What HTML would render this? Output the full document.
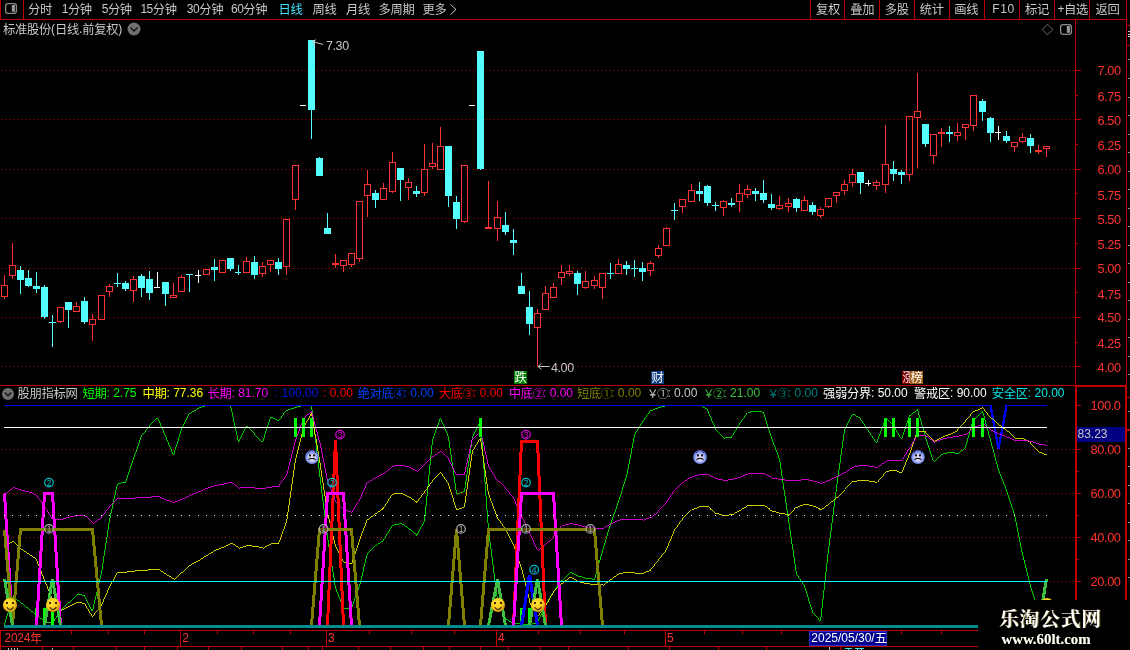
<!DOCTYPE html>
<html lang="zh-CN"><head><meta charset="utf-8"><title>标准股份 日线</title>
<style>html,body{margin:0;padding:0;background:#000;overflow:hidden}svg{display:block;will-change:transform}</style></head>
<body>
<svg width="1130" height="650" viewBox="0 0 1130 650" font-family='"Liberation Sans","Noto Sans CJK SC",sans-serif' font-weight="400">
<rect width="1130" height="650" fill="#000"/>
<g shape-rendering="crispEdges">
<pattern id="p0" x="1" y="0" width="4" height="1" patternUnits="userSpaceOnUse"><rect width="1" height="1" fill="#b40000"/></pattern>
<rect x="1" y="70" width="1074" height="1" fill="url(#p0)"/>
<rect x="1" y="119" width="1074" height="1" fill="url(#p0)"/>
<rect x="1" y="169" width="1074" height="1" fill="url(#p0)"/>
<rect x="1" y="218" width="1074" height="1" fill="url(#p0)"/>
<rect x="1" y="268" width="1074" height="1" fill="url(#p0)"/>
<rect x="1" y="317" width="1074" height="1" fill="url(#p0)"/>
<rect x="1" y="366" width="1074" height="1" fill="url(#p0)"/>
<rect x="1" y="449" width="1074" height="1" fill="url(#p0)"/>
<rect x="1" y="493" width="1074" height="1" fill="url(#p0)"/>
<rect x="1" y="537" width="1074" height="1" fill="url(#p0)"/>
<rect x="1" y="581" width="1074" height="1" fill="url(#p0)"/>
</g>
<g shape-rendering="crispEdges">
<rect x="4" y="275" width="1" height="10" fill="#ff3232"/>
<rect x="4" y="297" width="1" height="2" fill="#ff3232"/>
<rect x="1.5" y="285.5" width="6" height="11" fill="none" stroke="#ff3232" stroke-width="1"/>
<rect x="12" y="243" width="1" height="22" fill="#ff3232"/>
<rect x="12" y="276" width="1" height="3" fill="#ff3232"/>
<rect x="9.5" y="265.5" width="6" height="10" fill="none" stroke="#ff3232" stroke-width="1"/>
<rect x="20" y="266" width="1" height="28" fill="#54ffff"/>
<rect x="17" y="270" width="7" height="10" fill="#54ffff"/>
<rect x="28" y="270" width="1" height="17" fill="#54ffff"/>
<rect x="25" y="278" width="7" height="8" fill="#54ffff"/>
<rect x="36" y="272" width="1" height="21" fill="#54ffff"/>
<rect x="33" y="286" width="7" height="3" fill="#54ffff"/>
<rect x="44" y="285" width="1" height="34" fill="#54ffff"/>
<rect x="41" y="287" width="7" height="30" fill="#54ffff"/>
<rect x="52" y="315" width="1" height="32" fill="#54ffff"/>
<rect x="49" y="322" width="7" height="1" fill="#54ffff"/>
<rect x="60" y="322" width="1" height="1" fill="#ff3232"/>
<rect x="57.5" y="307.5" width="6" height="14" fill="none" stroke="#ff3232" stroke-width="1"/>
<rect x="68" y="302" width="1" height="26" fill="#54ffff"/>
<rect x="65" y="302" width="7" height="8" fill="#54ffff"/>
<rect x="76" y="302" width="1" height="4" fill="#ff3232"/>
<rect x="73.5" y="306.5" width="6" height="5" fill="none" stroke="#ff3232" stroke-width="1"/>
<rect x="84" y="297" width="1" height="27" fill="#54ffff"/>
<rect x="81" y="301" width="7" height="21" fill="#54ffff"/>
<rect x="92" y="314" width="1" height="5" fill="#ff3232"/>
<rect x="92" y="325" width="1" height="16" fill="#ff3232"/>
<rect x="89.5" y="319.5" width="6" height="5" fill="none" stroke="#ff3232" stroke-width="1"/>
<rect x="98.5" y="295.5" width="6" height="24" fill="none" stroke="#ff3232" stroke-width="1"/>
<rect x="109" y="284" width="1" height="2" fill="#ff3232"/>
<rect x="109" y="292" width="1" height="5" fill="#ff3232"/>
<rect x="106.5" y="286.5" width="6" height="5" fill="none" stroke="#ff3232" stroke-width="1"/>
<rect x="117" y="273" width="1" height="14" fill="#54ffff"/>
<rect x="114" y="283" width="7" height="1" fill="#54ffff"/>
<rect x="125" y="281" width="1" height="10" fill="#54ffff"/>
<rect x="122" y="283" width="7" height="6" fill="#54ffff"/>
<rect x="133" y="276" width="1" height="3" fill="#ff3232"/>
<rect x="133" y="291" width="1" height="11" fill="#ff3232"/>
<rect x="130.5" y="279.5" width="6" height="11" fill="none" stroke="#ff3232" stroke-width="1"/>
<rect x="141" y="274" width="1" height="23" fill="#54ffff"/>
<rect x="138" y="276" width="7" height="12" fill="#54ffff"/>
<rect x="149" y="271" width="1" height="29" fill="#54ffff"/>
<rect x="146" y="279" width="7" height="14" fill="#54ffff"/>
<rect x="157" y="272" width="1" height="16" fill="#ffffff"/>
<rect x="154" y="287" width="6" height="1" fill="#ffffff"/>
<rect x="165" y="282" width="1" height="24" fill="#54ffff"/>
<rect x="162" y="282" width="7" height="12" fill="#54ffff"/>
<rect x="173" y="283" width="1" height="12" fill="#ff3232"/>
<rect x="170.5" y="295.5" width="6" height="2" fill="none" stroke="#ff3232" stroke-width="1"/>
<rect x="181" y="275" width="1" height="2" fill="#ff3232"/>
<rect x="178.5" y="277.5" width="6" height="14" fill="none" stroke="#ff3232" stroke-width="1"/>
<rect x="189" y="274" width="1" height="18" fill="#54ffff"/>
<rect x="186" y="274" width="7" height="1" fill="#54ffff"/>
<rect x="198" y="270" width="1" height="13" fill="#ffffff"/>
<rect x="195" y="275" width="6" height="1" fill="#ffffff"/>
<rect x="203.5" y="269.5" width="6" height="5" fill="none" stroke="#ff3232" stroke-width="1"/>
<rect x="214" y="259" width="1" height="22" fill="#54ffff"/>
<rect x="211" y="267" width="7" height="3" fill="#54ffff"/>
<rect x="219.5" y="260.5" width="6" height="12" fill="none" stroke="#ff3232" stroke-width="1"/>
<rect x="230" y="258" width="1" height="13" fill="#54ffff"/>
<rect x="227" y="258" width="7" height="11" fill="#54ffff"/>
<rect x="238" y="265" width="1" height="10" fill="#54ffff"/>
<rect x="235" y="272" width="6" height="1" fill="#54ffff"/>
<rect x="246" y="257" width="1" height="4" fill="#ff3232"/>
<rect x="243.5" y="261.5" width="6" height="11" fill="none" stroke="#ff3232" stroke-width="1"/>
<rect x="254" y="256" width="1" height="23" fill="#54ffff"/>
<rect x="251" y="262" width="7" height="13" fill="#54ffff"/>
<rect x="262" y="262" width="1" height="4" fill="#ff3232"/>
<rect x="262" y="274" width="1" height="3" fill="#ff3232"/>
<rect x="259.5" y="266.5" width="6" height="7" fill="none" stroke="#ff3232" stroke-width="1"/>
<rect x="270" y="265" width="1" height="7" fill="#ff3232"/>
<rect x="267.5" y="260.5" width="6" height="4" fill="none" stroke="#ff3232" stroke-width="1"/>
<rect x="278" y="258" width="1" height="17" fill="#54ffff"/>
<rect x="275" y="262" width="7" height="7" fill="#54ffff"/>
<rect x="286" y="267" width="1" height="8" fill="#ff3232"/>
<rect x="283.5" y="219.5" width="6" height="47" fill="none" stroke="#ff3232" stroke-width="1"/>
<rect x="295" y="200" width="1" height="10" fill="#ff3232"/>
<rect x="292.5" y="165.5" width="6" height="34" fill="none" stroke="#ff3232" stroke-width="1"/>
<rect x="300" y="105" width="6" height="1" fill="#fff"/>
<rect x="311" y="40" width="1" height="99" fill="#54ffff"/>
<rect x="308" y="40" width="7" height="70" fill="#54ffff"/>
<rect x="319" y="157" width="1" height="19" fill="#54ffff"/>
<rect x="316" y="158" width="7" height="18" fill="#54ffff"/>
<rect x="327" y="213" width="1" height="21" fill="#54ffff"/>
<rect x="324" y="228" width="7" height="6" fill="#54ffff"/>
<rect x="335" y="254" width="1" height="14" fill="#ff3232"/>
<rect x="332" y="263" width="7" height="2" fill="#ff3232"/>
<rect x="343" y="266" width="1" height="6" fill="#ff3232"/>
<rect x="340.5" y="260.5" width="6" height="5" fill="none" stroke="#ff3232" stroke-width="1"/>
<rect x="351" y="265" width="1" height="2" fill="#ff3232"/>
<rect x="348.5" y="253.5" width="6" height="11" fill="none" stroke="#ff3232" stroke-width="1"/>
<rect x="359" y="259" width="1" height="3" fill="#ff3232"/>
<rect x="356.5" y="201.5" width="6" height="57" fill="none" stroke="#ff3232" stroke-width="1"/>
<rect x="367" y="170" width="1" height="14" fill="#ff3232"/>
<rect x="367" y="196" width="1" height="21" fill="#ff3232"/>
<rect x="364.5" y="184.5" width="6" height="11" fill="none" stroke="#ff3232" stroke-width="1"/>
<rect x="375" y="190" width="1" height="18" fill="#54ffff"/>
<rect x="372" y="193" width="7" height="7" fill="#54ffff"/>
<rect x="383" y="183" width="1" height="5" fill="#ff3232"/>
<rect x="380.5" y="188.5" width="6" height="11" fill="none" stroke="#ff3232" stroke-width="1"/>
<rect x="392" y="152" width="1" height="10" fill="#ff3232"/>
<rect x="392" y="192" width="1" height="1" fill="#ff3232"/>
<rect x="389.5" y="162.5" width="6" height="29" fill="none" stroke="#ff3232" stroke-width="1"/>
<rect x="400" y="168" width="1" height="33" fill="#54ffff"/>
<rect x="397" y="168" width="7" height="12" fill="#54ffff"/>
<rect x="408" y="178" width="1" height="4" fill="#ff3232"/>
<rect x="408" y="188" width="1" height="12" fill="#ff3232"/>
<rect x="405.5" y="182.5" width="6" height="5" fill="none" stroke="#ff3232" stroke-width="1"/>
<rect x="416" y="186" width="1" height="11" fill="#54ffff"/>
<rect x="413" y="191" width="7" height="3" fill="#54ffff"/>
<rect x="424" y="144" width="1" height="25" fill="#ff3232"/>
<rect x="424" y="193" width="1" height="3" fill="#ff3232"/>
<rect x="421.5" y="169.5" width="6" height="23" fill="none" stroke="#ff3232" stroke-width="1"/>
<rect x="432" y="143" width="1" height="20" fill="#ff3232"/>
<rect x="432" y="167" width="1" height="2" fill="#ff3232"/>
<rect x="429.5" y="163.5" width="6" height="3" fill="none" stroke="#ff3232" stroke-width="1"/>
<rect x="440" y="127" width="1" height="19" fill="#ff3232"/>
<rect x="437.5" y="146.5" width="6" height="23" fill="none" stroke="#ff3232" stroke-width="1"/>
<rect x="448" y="146" width="1" height="61" fill="#54ffff"/>
<rect x="445" y="146" width="7" height="50" fill="#54ffff"/>
<rect x="456" y="196" width="1" height="33" fill="#54ffff"/>
<rect x="453" y="202" width="7" height="17" fill="#54ffff"/>
<rect x="464" y="222" width="1" height="1" fill="#ff3232"/>
<rect x="461.5" y="165.5" width="6" height="56" fill="none" stroke="#ff3232" stroke-width="1"/>
<rect x="469" y="105" width="6" height="1" fill="#fff"/>
<rect x="480" y="51" width="1" height="119" fill="#54ffff"/>
<rect x="477" y="51" width="7" height="118" fill="#54ffff"/>
<rect x="488" y="181" width="1" height="48" fill="#ff3232"/>
<rect x="485" y="227" width="7" height="2" fill="#ff3232"/>
<rect x="497" y="201" width="1" height="16" fill="#ff3232"/>
<rect x="497" y="229" width="1" height="12" fill="#ff3232"/>
<rect x="494.5" y="217.5" width="6" height="11" fill="none" stroke="#ff3232" stroke-width="1"/>
<rect x="505" y="212" width="1" height="23" fill="#54ffff"/>
<rect x="502" y="225" width="7" height="7" fill="#54ffff"/>
<rect x="513" y="229" width="1" height="26" fill="#54ffff"/>
<rect x="510" y="240" width="7" height="3" fill="#54ffff"/>
<rect x="521" y="273" width="1" height="21" fill="#54ffff"/>
<rect x="518" y="286" width="7" height="8" fill="#54ffff"/>
<rect x="529" y="291" width="1" height="44" fill="#54ffff"/>
<rect x="526" y="307" width="7" height="17" fill="#54ffff"/>
<rect x="537" y="309" width="1" height="4" fill="#ff3232"/>
<rect x="537" y="328" width="1" height="38" fill="#ff3232"/>
<rect x="534.5" y="313.5" width="6" height="14" fill="none" stroke="#ff3232" stroke-width="1"/>
<rect x="545" y="286" width="1" height="7" fill="#ff3232"/>
<rect x="542.5" y="293.5" width="6" height="16" fill="none" stroke="#ff3232" stroke-width="1"/>
<rect x="553" y="283" width="1" height="4" fill="#ff3232"/>
<rect x="550.5" y="287.5" width="6" height="10" fill="none" stroke="#ff3232" stroke-width="1"/>
<rect x="561" y="265" width="1" height="7" fill="#ff3232"/>
<rect x="561" y="278" width="1" height="7" fill="#ff3232"/>
<rect x="558.5" y="272.5" width="6" height="5" fill="none" stroke="#ff3232" stroke-width="1"/>
<rect x="569" y="265" width="1" height="6" fill="#ff3232"/>
<rect x="569" y="274" width="1" height="2" fill="#ff3232"/>
<rect x="566.5" y="271.5" width="6" height="2" fill="none" stroke="#ff3232" stroke-width="1"/>
<rect x="577" y="271" width="1" height="24" fill="#54ffff"/>
<rect x="574" y="273" width="7" height="11" fill="#54ffff"/>
<rect x="585" y="271" width="1" height="10" fill="#ff3232"/>
<rect x="585" y="288" width="1" height="1" fill="#ff3232"/>
<rect x="582.5" y="281.5" width="6" height="6" fill="none" stroke="#ff3232" stroke-width="1"/>
<rect x="594" y="276" width="1" height="4" fill="#ff3232"/>
<rect x="594" y="286" width="1" height="3" fill="#ff3232"/>
<rect x="591.5" y="280.5" width="6" height="5" fill="none" stroke="#ff3232" stroke-width="1"/>
<rect x="602" y="288" width="1" height="11" fill="#ff3232"/>
<rect x="599.5" y="273.5" width="6" height="14" fill="none" stroke="#ff3232" stroke-width="1"/>
<rect x="610" y="263" width="1" height="16" fill="#54ffff"/>
<rect x="607" y="273" width="7" height="1" fill="#54ffff"/>
<rect x="618" y="259" width="1" height="5" fill="#ff3232"/>
<rect x="615.5" y="264.5" width="6" height="9" fill="none" stroke="#ff3232" stroke-width="1"/>
<rect x="626" y="261" width="1" height="14" fill="#54ffff"/>
<rect x="623" y="265" width="7" height="4" fill="#54ffff"/>
<rect x="634" y="260" width="1" height="17" fill="#54ffff"/>
<rect x="631" y="268" width="7" height="1" fill="#54ffff"/>
<rect x="642" y="262" width="1" height="19" fill="#54ffff"/>
<rect x="639" y="268" width="7" height="4" fill="#54ffff"/>
<rect x="650" y="261" width="1" height="2" fill="#ff3232"/>
<rect x="650" y="271" width="1" height="5" fill="#ff3232"/>
<rect x="647.5" y="263.5" width="6" height="7" fill="none" stroke="#ff3232" stroke-width="1"/>
<rect x="658" y="245" width="1" height="3" fill="#ff3232"/>
<rect x="658" y="256" width="1" height="2" fill="#ff3232"/>
<rect x="655.5" y="248.5" width="6" height="7" fill="none" stroke="#ff3232" stroke-width="1"/>
<rect x="666" y="227" width="1" height="1" fill="#ff3232"/>
<rect x="663.5" y="228.5" width="6" height="17" fill="none" stroke="#ff3232" stroke-width="1"/>
<rect x="674" y="203" width="1" height="17" fill="#54ffff"/>
<rect x="671" y="210" width="7" height="1" fill="#54ffff"/>
<rect x="682" y="207" width="1" height="6" fill="#ff3232"/>
<rect x="679.5" y="199.5" width="6" height="7" fill="none" stroke="#ff3232" stroke-width="1"/>
<rect x="691" y="184" width="1" height="6" fill="#ff3232"/>
<rect x="688.5" y="190.5" width="6" height="11" fill="none" stroke="#ff3232" stroke-width="1"/>
<rect x="699" y="182" width="1" height="19" fill="#54ffff"/>
<rect x="696" y="191" width="7" height="3" fill="#54ffff"/>
<rect x="707" y="185" width="1" height="21" fill="#54ffff"/>
<rect x="704" y="186" width="7" height="17" fill="#54ffff"/>
<rect x="715" y="202" width="1" height="9" fill="#54ffff"/>
<rect x="712" y="205" width="7" height="1" fill="#54ffff"/>
<rect x="723" y="200" width="1" height="1" fill="#ff3232"/>
<rect x="723" y="208" width="1" height="8" fill="#ff3232"/>
<rect x="720.5" y="201.5" width="6" height="6" fill="none" stroke="#ff3232" stroke-width="1"/>
<rect x="731" y="198" width="1" height="9" fill="#54ffff"/>
<rect x="728" y="203" width="7" height="2" fill="#54ffff"/>
<rect x="739" y="184" width="1" height="9" fill="#ff3232"/>
<rect x="739" y="202" width="1" height="10" fill="#ff3232"/>
<rect x="736.5" y="193.5" width="6" height="8" fill="none" stroke="#ff3232" stroke-width="1"/>
<rect x="747" y="185" width="1" height="4" fill="#ff3232"/>
<rect x="747" y="195" width="1" height="3" fill="#ff3232"/>
<rect x="744.5" y="189.5" width="6" height="5" fill="none" stroke="#ff3232" stroke-width="1"/>
<rect x="755" y="188" width="1" height="13" fill="#54ffff"/>
<rect x="752" y="191" width="7" height="3" fill="#54ffff"/>
<rect x="763" y="180" width="1" height="23" fill="#54ffff"/>
<rect x="760" y="193" width="7" height="7" fill="#54ffff"/>
<rect x="771" y="194" width="1" height="16" fill="#54ffff"/>
<rect x="768" y="204" width="7" height="4" fill="#54ffff"/>
<rect x="779" y="196" width="1" height="9" fill="#ff3232"/>
<rect x="779" y="209" width="1" height="1" fill="#ff3232"/>
<rect x="776.5" y="205.5" width="6" height="3" fill="none" stroke="#ff3232" stroke-width="1"/>
<rect x="788" y="198" width="1" height="5" fill="#ff3232"/>
<rect x="788" y="207" width="1" height="5" fill="#ff3232"/>
<rect x="785.5" y="203.5" width="6" height="3" fill="none" stroke="#ff3232" stroke-width="1"/>
<rect x="796" y="198" width="1" height="14" fill="#54ffff"/>
<rect x="793" y="199" width="7" height="9" fill="#54ffff"/>
<rect x="804" y="196" width="1" height="4" fill="#ff3232"/>
<rect x="801.5" y="200.5" width="6" height="10" fill="none" stroke="#ff3232" stroke-width="1"/>
<rect x="812" y="202" width="1" height="13" fill="#54ffff"/>
<rect x="809" y="205" width="7" height="7" fill="#54ffff"/>
<rect x="820" y="207" width="1" height="2" fill="#ff3232"/>
<rect x="820" y="216" width="1" height="2" fill="#ff3232"/>
<rect x="817.5" y="209.5" width="6" height="6" fill="none" stroke="#ff3232" stroke-width="1"/>
<rect x="828" y="207" width="1" height="1" fill="#ff3232"/>
<rect x="825.5" y="198.5" width="6" height="8" fill="none" stroke="#ff3232" stroke-width="1"/>
<rect x="836" y="196" width="1" height="7" fill="#ff3232"/>
<rect x="833.5" y="192.5" width="6" height="3" fill="none" stroke="#ff3232" stroke-width="1"/>
<rect x="844" y="180" width="1" height="4" fill="#ff3232"/>
<rect x="844" y="191" width="1" height="4" fill="#ff3232"/>
<rect x="841.5" y="184.5" width="6" height="6" fill="none" stroke="#ff3232" stroke-width="1"/>
<rect x="852" y="169" width="1" height="5" fill="#ff3232"/>
<rect x="852" y="183" width="1" height="4" fill="#ff3232"/>
<rect x="849.5" y="174.5" width="6" height="8" fill="none" stroke="#ff3232" stroke-width="1"/>
<rect x="860" y="172" width="1" height="22" fill="#54ffff"/>
<rect x="857" y="172" width="7" height="11" fill="#54ffff"/>
<rect x="868" y="180" width="1" height="6" fill="#ffffff"/>
<rect x="865" y="183" width="6" height="1" fill="#ffffff"/>
<rect x="876" y="180" width="1" height="2" fill="#ff3232"/>
<rect x="876" y="186" width="1" height="4" fill="#ff3232"/>
<rect x="873.5" y="182.5" width="6" height="3" fill="none" stroke="#ff3232" stroke-width="1"/>
<rect x="885" y="125" width="1" height="39" fill="#ff3232"/>
<rect x="885" y="185" width="1" height="8" fill="#ff3232"/>
<rect x="882.5" y="164.5" width="6" height="20" fill="none" stroke="#ff3232" stroke-width="1"/>
<rect x="893" y="161" width="1" height="20" fill="#54ffff"/>
<rect x="890" y="169" width="7" height="5" fill="#54ffff"/>
<rect x="901" y="170" width="1" height="14" fill="#54ffff"/>
<rect x="898" y="172" width="7" height="3" fill="#54ffff"/>
<rect x="909" y="175" width="1" height="6" fill="#ff3232"/>
<rect x="906.5" y="116.5" width="6" height="58" fill="none" stroke="#ff3232" stroke-width="1"/>
<rect x="917" y="73" width="1" height="38" fill="#ff3232"/>
<rect x="917" y="118" width="1" height="50" fill="#ff3232"/>
<rect x="914.5" y="111.5" width="6" height="6" fill="none" stroke="#ff3232" stroke-width="1"/>
<rect x="925" y="124" width="1" height="23" fill="#54ffff"/>
<rect x="922" y="124" width="7" height="20" fill="#54ffff"/>
<rect x="933" y="156" width="1" height="8" fill="#ff3232"/>
<rect x="930.5" y="134.5" width="6" height="21" fill="none" stroke="#ff3232" stroke-width="1"/>
<rect x="941" y="128" width="1" height="19" fill="#ff3232"/>
<rect x="938" y="132" width="7" height="2" fill="#ff3232"/>
<rect x="949" y="126" width="1" height="16" fill="#54ffff"/>
<rect x="946" y="132" width="7" height="2" fill="#54ffff"/>
<rect x="957" y="123" width="1" height="9" fill="#ff3232"/>
<rect x="957" y="136" width="1" height="5" fill="#ff3232"/>
<rect x="954.5" y="132.5" width="6" height="3" fill="none" stroke="#ff3232" stroke-width="1"/>
<rect x="965" y="128" width="1" height="12" fill="#ff3232"/>
<rect x="962.5" y="124.5" width="6" height="3" fill="none" stroke="#ff3232" stroke-width="1"/>
<rect x="973" y="126" width="1" height="5" fill="#ff3232"/>
<rect x="970.5" y="95.5" width="6" height="30" fill="none" stroke="#ff3232" stroke-width="1"/>
<rect x="982" y="99" width="1" height="22" fill="#54ffff"/>
<rect x="979" y="101" width="7" height="11" fill="#54ffff"/>
<rect x="990" y="117" width="1" height="25" fill="#54ffff"/>
<rect x="987" y="118" width="7" height="15" fill="#54ffff"/>
<rect x="998" y="126" width="1" height="14" fill="#ffffff"/>
<rect x="995" y="132" width="6" height="1" fill="#ffffff"/>
<rect x="1006" y="131" width="1" height="12" fill="#54ffff"/>
<rect x="1003" y="136" width="7" height="5" fill="#54ffff"/>
<rect x="1014" y="147" width="1" height="5" fill="#ff3232"/>
<rect x="1011.5" y="142.5" width="6" height="4" fill="none" stroke="#ff3232" stroke-width="1"/>
<rect x="1022" y="133" width="1" height="4" fill="#ff3232"/>
<rect x="1022" y="142" width="1" height="1" fill="#ff3232"/>
<rect x="1019.5" y="137.5" width="6" height="4" fill="none" stroke="#ff3232" stroke-width="1"/>
<rect x="1030" y="134" width="1" height="19" fill="#54ffff"/>
<rect x="1027" y="138" width="7" height="8" fill="#54ffff"/>
<rect x="1038" y="145" width="1" height="9" fill="#ff3232"/>
<rect x="1035" y="150" width="7" height="2" fill="#ff3232"/>
<rect x="1046" y="149" width="1" height="8" fill="#ff3232"/>
<rect x="1043.5" y="146.5" width="6" height="2" fill="none" stroke="#ff3232" stroke-width="1"/>
</g>
<path d="M312.5 41.5 L323 44.5 M312.5 41.5 l3.5 -1.8 M312.5 41.5 l2 3.2" stroke="#c8c8c8" stroke-width="1" fill="none"/>
<text x="326" y="50.92" fill="#c8c8c8" xml:space="preserve"><tspan font-size="12.5" letter-spacing="-0.4" dy="-0.8">7.30</tspan></text>
<path d="M538 366.5 H549.5 M538 366.5 l3.5 -3 M538 366.5 l3.5 3" stroke="#c8c8c8" stroke-width="1" fill="none"/>
<text x="551" y="372.82" fill="#c8c8c8" xml:space="preserve"><tspan font-size="12.5" letter-spacing="-0.4" dy="-0.8">4.00</tspan></text>
<rect x="514" y="371" width="13" height="13" fill="#008000"/>
<text x="520.5" y="381.82" fill="#ffffff" text-anchor="middle" font-weight="400" xml:space="preserve"><tspan font-size="12.3" letter-spacing="-0.3">跌</tspan></text>
<rect x="651" y="371" width="13" height="13" fill="#103c80"/>
<text x="657.5" y="381.82" fill="#ffffff" text-anchor="middle" font-weight="400" xml:space="preserve"><tspan font-size="12.3" letter-spacing="-0.3">财</tspan></text>
<rect x="902" y="371" width="13" height="13" fill="#800000"/>
<text x="908.5" y="381.82" fill="#ffffff" text-anchor="middle" font-weight="400" xml:space="preserve"><tspan font-size="12.3" letter-spacing="-0.3">涨</tspan></text>
<rect x="910" y="371" width="13" height="13" fill="#a0601c"/>
<text x="916.5" y="381.82" fill="#ffffff" text-anchor="middle" font-weight="400" xml:space="preserve"><tspan font-size="12.3" letter-spacing="-0.3">榜</tspan></text>
<polyline points="990.5,405.4 998.5,449.0 1006.5,405.4" fill="none" stroke="#0000ff" stroke-width="2.3" shape-rendering="crispEdges" stroke-linejoin="miter"/>
<polyline points="4.5,624.7 12.5,597.0 20.5,603.2 28.5,609.5 36.5,615.7 44.5,622.3 52.5,623.0 60.5,610.6 68.5,602.0 76.5,594.3 84.5,595.5 92.5,610.6 101.5,573.0 109.5,520.0 117.5,483.6 125.5,482.0 133.5,458.6 141.5,436.0 149.5,426.0 157.5,417.6 165.5,436.2 173.5,455.4 181.5,429.0 189.5,413.0 198.5,407.8 206.5,405.4 214.5,405.4 222.5,405.4 230.5,405.4 238.5,442.4 246.5,426.0 254.5,434.0 262.5,442.4 270.5,417.0 278.5,421.0 286.5,410.0 295.5,407.0 303.5,405.4 311.5,405.4 319.5,473.0 327.5,537.0 335.5,588.0 343.5,608.0 351.5,608.0 359.5,586.0 367.5,553.0 375.5,545.0 383.5,540.0 392.5,525.0 400.5,523.6 408.5,529.0 416.5,535.6 424.5,521.0 432.5,440.0 440.5,418.0 448.5,437.0 456.5,494.0 464.5,491.0 472.5,437.0 480.5,421.0 488.5,530.0 497.5,600.0 505.5,619.0 513.5,623.0 521.5,624.3 529.5,624.3 537.5,622.5 545.5,605.0 553.5,592.0 561.5,580.0 569.5,572.4 577.5,576.0 585.5,578.4 594.5,579.4 602.5,551.0 610.5,524.0 618.5,502.0 626.5,476.0 634.5,434.5 642.5,422.0 650.5,410.4 658.5,407.4 666.5,405.4 674.5,405.4 682.5,405.4 691.5,405.4 699.5,405.4 707.5,410.0 715.5,429.0 723.5,438.0 731.5,437.0 739.5,424.0 747.5,412.6 755.5,411.0 763.5,412.6 771.5,438.0 779.5,459.0 788.5,520.0 796.5,574.0 804.5,586.0 812.5,612.0 820.5,621.4 828.5,550.0 836.5,488.0 844.5,430.0 852.5,414.4 860.5,419.0 868.5,431.0 876.5,443.0 885.5,419.0 893.5,426.0 901.5,439.0 909.5,415.0 917.5,409.4 925.5,437.0 933.5,461.0 941.5,454.0 949.5,452.4 957.5,453.4 965.5,447.0 973.5,419.0 982.5,411.0 990.5,440.0 998.5,470.0 1006.5,490.0 1014.5,515.0 1022.5,554.0 1030.5,586.0 1038.5,612.0 1046.5,619.7" fill="none" stroke="#00ff00" stroke-width="0.8" shape-rendering="crispEdges"/>
<polyline points="4.5,545.0 12.5,541.0 20.5,549.0 28.5,554.4 36.5,560.0 44.5,580.0 52.5,600.0 60.5,610.0 68.5,606.0 76.5,602.4 84.5,603.6 92.5,616.6 101.5,605.0 109.5,587.0 117.5,572.4 125.5,572.0 133.5,571.0 141.5,570.6 149.5,569.8 157.5,569.0 165.5,574.4 173.5,579.4 181.5,572.0 189.5,565.0 198.5,560.0 206.5,555.0 214.5,550.4 222.5,547.0 230.5,543.0 238.5,548.0 246.5,545.6 254.5,546.4 262.5,548.0 270.5,543.6 278.5,543.6 286.5,522.0 295.5,460.0 303.5,428.0 311.5,413.0 319.5,460.0 327.5,513.0 335.5,546.0 343.5,562.0 351.5,564.0 359.5,540.0 367.5,519.0 375.5,513.0 383.5,508.0 392.5,494.0 400.5,493.0 408.5,497.0 416.5,502.6 424.5,492.0 432.5,481.0 440.5,472.0 448.5,484.0 456.5,509.5 464.5,506.5 472.5,451.0 480.5,438.0 488.5,494.0 497.5,518.0 505.5,529.0 513.5,545.0 521.5,568.0 529.5,600.5 537.5,616.7 545.5,606.0 553.5,592.0 561.5,583.0 569.5,577.0 577.5,581.6 585.5,583.6 594.5,584.6 602.5,585.0 610.5,579.0 618.5,573.6 626.5,572.4 634.5,573.0 642.5,573.0 650.5,570.0 658.5,560.0 666.5,549.6 674.5,530.0 682.5,519.0 691.5,509.8 699.5,506.6 707.5,506.6 715.5,513.4 723.5,515.6 731.5,514.6 739.5,510.0 747.5,505.4 755.5,505.0 763.5,505.4 771.5,511.0 779.5,513.4 788.5,514.6 796.5,507.0 804.5,504.0 812.5,506.0 820.5,509.6 828.5,503.6 836.5,497.0 844.5,489.4 852.5,481.4 860.5,480.4 868.5,481.0 876.5,482.4 885.5,471.5 893.5,470.0 901.5,473.4 909.5,454.0 917.5,431.0 925.5,432.0 933.5,441.0 941.5,437.0 949.5,434.0 957.5,430.0 965.5,421.0 973.5,411.4 982.5,407.4 990.5,418.0 998.5,425.0 1006.5,431.0 1014.5,438.0 1022.5,438.6 1030.5,443.0 1038.5,452.0 1046.5,455.4" fill="none" stroke="#ffff00" stroke-width="0.8" shape-rendering="crispEdges"/>
<polyline points="4.5,494.0 12.5,487.4 20.5,490.0 28.5,492.0 36.5,495.6 44.5,506.0 52.5,519.4 60.5,519.4 68.5,517.0 76.5,515.4 84.5,516.0 92.5,523.0 101.5,517.0 109.5,507.0 117.5,498.4 125.5,498.4 133.5,498.0 141.5,497.4 149.5,497.0 157.5,496.4 165.5,500.0 173.5,502.4 181.5,499.0 189.5,495.0 198.5,491.6 206.5,488.0 214.5,485.5 222.5,484.0 230.5,482.4 238.5,488.0 246.5,487.4 254.5,488.0 262.5,488.4 270.5,487.0 278.5,486.4 286.5,475.0 295.5,439.5 303.5,417.5 311.5,410.5 319.5,441.0 327.5,480.0 335.5,501.0 343.5,510.0 351.5,512.4 359.5,500.0 367.5,482.0 375.5,477.0 383.5,473.0 392.5,466.0 400.5,465.0 408.5,467.0 416.5,471.0 424.5,464.0 432.5,456.0 440.5,451.0 448.5,459.0 456.5,475.0 464.5,474.0 472.5,438.0 480.5,431.0 488.5,466.0 497.5,481.0 505.5,488.0 513.5,498.0 521.5,516.0 529.5,533.0 537.5,550.0 545.5,543.6 553.5,537.0 561.5,525.6 569.5,523.6 577.5,525.0 585.5,527.0 594.5,528.0 602.5,528.0 610.5,523.6 618.5,520.0 626.5,519.5 634.5,519.5 642.5,520.0 650.5,517.0 658.5,511.0 666.5,502.0 674.5,490.0 682.5,482.0 691.5,476.6 699.5,474.4 707.5,474.6 715.5,478.6 723.5,480.4 731.5,479.4 739.5,477.0 747.5,473.6 755.5,473.4 763.5,473.6 771.5,478.0 779.5,479.6 788.5,480.4 796.5,480.4 804.5,479.4 812.5,481.0 820.5,483.4 828.5,480.0 836.5,476.0 844.5,472.0 852.5,467.0 860.5,465.4 868.5,466.0 876.5,467.4 885.5,461.0 893.5,460.0 901.5,461.0 909.5,448.0 917.5,435.0 925.5,436.0 933.5,442.0 941.5,439.0 949.5,437.4 957.5,436.0 965.5,434.4 973.5,427.0 982.5,424.0 990.5,430.0 998.5,434.0 1006.5,437.0 1014.5,440.6 1022.5,440.0 1030.5,441.4 1038.5,444.0 1046.5,445.6" fill="none" stroke="#ff00ff" stroke-width="0.8" shape-rendering="crispEdges"/>
<polyline points="4.5,405.4 12.5,405.4 20.5,405.4 28.5,405.4 36.5,405.4 44.5,405.4 52.5,405.4 60.5,405.4 68.5,405.4 76.5,405.4 84.5,405.4 92.5,405.4 101.5,405.4 109.5,405.4 117.5,405.4 125.5,405.4 133.5,405.4 141.5,405.4 149.5,405.4 157.5,405.4 165.5,405.4 173.5,405.4 181.5,405.4 189.5,405.4 198.5,405.4 206.5,405.4 214.5,405.4 222.5,405.4 230.5,405.4 238.5,405.4 246.5,405.4 254.5,405.4 262.5,405.4 270.5,405.4 278.5,405.4 286.5,405.4 295.5,405.4 303.5,405.4 311.5,405.4 319.5,405.4 327.5,405.4 335.5,405.4 343.5,405.4 351.5,405.4 359.5,405.4 367.5,405.4 375.5,405.4 383.5,405.4 392.5,405.4 400.5,405.4 408.5,405.4 416.5,405.4 424.5,405.4 432.5,405.4 440.5,405.4 448.5,405.4 456.5,405.4 464.5,405.4 472.5,405.4 480.5,405.4 488.5,405.4 497.5,405.4 505.5,405.4 513.5,405.4 521.5,405.4 529.5,405.4 537.5,405.4 545.5,405.4 553.5,405.4 561.5,405.4 569.5,405.4 577.5,405.4 585.5,405.4 594.5,405.4 602.5,405.4 610.5,405.4 618.5,405.4 626.5,405.4 634.5,405.4 642.5,405.4 650.5,405.4 658.5,405.4 666.5,405.4 674.5,405.4 682.5,405.4 691.5,405.4 699.5,405.4 707.5,405.4 715.5,405.4 723.5,405.4 731.5,405.4 739.5,405.4 747.5,405.4 755.5,405.4 763.5,405.4 771.5,405.4 779.5,405.4 788.5,405.4 796.5,405.4 804.5,405.4 812.5,405.4 820.5,405.4 828.5,405.4 836.5,405.4 844.5,405.4 852.5,405.4 860.5,405.4 868.5,405.4 876.5,405.4 885.5,405.4 893.5,405.4 901.5,405.4 909.5,405.4 917.5,405.4 925.5,405.4 933.5,405.4 941.5,405.4 949.5,405.4 957.5,405.4 965.5,405.4 973.5,405.4 982.5,405.4 990.5,405.4" fill="none" stroke="#0000ff" stroke-width="1.4" shape-rendering="crispEdges"/>
<polyline points="1006.5,405.4 1014.5,405.4 1022.5,405.4 1030.5,405.4 1038.5,405.4 1046.5,405.4" fill="none" stroke="#0000ff" stroke-width="1.4" shape-rendering="crispEdges"/>
<g shape-rendering="crispEdges">
<rect x="43" y="608" width="3" height="17" fill="#00ff00"/>
<rect x="51" y="612" width="3" height="13" fill="#00ff00"/>
<rect x="520" y="608" width="3" height="17" fill="#00ff00"/>
<rect x="528" y="608" width="3" height="17" fill="#00ff00"/>
<rect x="35" y="608" width="1" height="9" fill="#00ff00"/>
</g>
<polyline points="521.5,625.5 529.5,575.0 537.5,625.5" fill="none" stroke="#0000ff" stroke-width="3.2" shape-rendering="crispEdges" stroke-linejoin="miter"/>
<polyline points="327.5,625.5 335.5,440.0 343.5,625.5" fill="none" stroke="#ff0000" stroke-width="3" shape-rendering="crispEdges" stroke-linejoin="miter"/>
<polyline points="513.5,625.5 521.5,441.0 529.5,441.0 537.5,441.0 545.5,625.5" fill="none" stroke="#ff0000" stroke-width="3" shape-rendering="crispEdges" stroke-linejoin="miter"/>
<polyline points="4.5,493.5 12.5,625.5" fill="none" stroke="#ff00ff" stroke-width="3" shape-rendering="crispEdges" stroke-linejoin="miter"/>
<polyline points="36.5,625.5 44.5,493.5 52.5,493.5 60.5,625.5" fill="none" stroke="#ff00ff" stroke-width="3" shape-rendering="crispEdges" stroke-linejoin="miter"/>
<polyline points="319.5,625.5 327.5,493.5 335.5,493.5 343.5,493.5 351.5,625.5" fill="none" stroke="#ff00ff" stroke-width="3" shape-rendering="crispEdges" stroke-linejoin="miter"/>
<polyline points="513.5,625.5 521.5,493.5 529.5,493.5 537.5,493.5 545.5,493.5 553.5,493.5 561.5,625.5" fill="none" stroke="#ff00ff" stroke-width="3" shape-rendering="crispEdges" stroke-linejoin="miter"/>
<polyline points="4.5,529.6 12.5,625.5 20.5,529.6 28.5,529.6 36.5,529.6 44.5,529.6 52.5,529.6 60.5,529.6 68.5,529.6 76.5,529.6 84.5,529.6 92.5,529.6 101.5,625.5" fill="none" stroke="#808000" stroke-width="3" shape-rendering="crispEdges" stroke-linejoin="miter"/>
<polyline points="311.5,625.5 319.5,529.6 327.5,529.6 335.5,529.6 343.5,529.6 351.5,529.6 359.5,625.5" fill="none" stroke="#808000" stroke-width="3" shape-rendering="crispEdges" stroke-linejoin="miter"/>
<polyline points="448.5,625.5 456.5,529.6 464.5,625.5" fill="none" stroke="#808000" stroke-width="3" shape-rendering="crispEdges" stroke-linejoin="miter"/>
<polyline points="480.5,625.5 488.5,529.6 497.5,529.6 505.5,529.6 513.5,529.6 521.5,529.6 529.5,529.6 537.5,529.6 545.5,529.6 553.5,529.6 561.5,529.6 569.5,529.6 577.5,529.6 585.5,529.6 594.5,529.6 602.5,625.5" fill="none" stroke="#808000" stroke-width="3" shape-rendering="crispEdges" stroke-linejoin="miter"/>
<polyline points="4.5,579.0 12.5,625.5" fill="none" stroke="#40c040" stroke-width="3" shape-rendering="crispEdges" stroke-linejoin="miter"/>
<polyline points="44.5,625.5 52.5,579.0 60.5,625.5" fill="none" stroke="#40c040" stroke-width="3" shape-rendering="crispEdges" stroke-linejoin="miter"/>
<polyline points="488.5,625.5 497.5,579.0 505.5,625.5" fill="none" stroke="#40c040" stroke-width="3" shape-rendering="crispEdges" stroke-linejoin="miter"/>
<polyline points="529.5,625.5 537.5,579.0 545.5,625.5" fill="none" stroke="#40c040" stroke-width="3" shape-rendering="crispEdges" stroke-linejoin="miter"/>
<polyline points="1038.5,625.5 1046.5,579.0" fill="none" stroke="#40c040" stroke-width="3" shape-rendering="crispEdges" stroke-linejoin="miter"/>
<g shape-rendering="crispEdges">
<rect x="294" y="418" width="3" height="19" fill="#00ff00"/>
<rect x="302" y="418" width="3" height="19" fill="#00ff00"/>
<rect x="310" y="418" width="3" height="19" fill="#00ff00"/>
<rect x="479" y="418" width="3" height="19" fill="#00ff00"/>
<rect x="884" y="418" width="3" height="19" fill="#00ff00"/>
<rect x="892" y="418" width="3" height="19" fill="#00ff00"/>
<rect x="908" y="418" width="3" height="19" fill="#00ff00"/>
<rect x="916" y="418" width="3" height="19" fill="#00ff00"/>
<rect x="972" y="418" width="3" height="19" fill="#00ff00"/>
<rect x="981" y="418" width="3" height="19" fill="#00ff00"/>
<rect x="4" y="427" width="1043" height="1" fill="#ffffff"/>
<rect x="4" y="581" width="1043" height="1" fill="#00ffff"/>
</g>
<path shape-rendering="crispEdges" d="M4 515.5h1M12 515.5h1M20 515.5h1M28 515.5h1M36 515.5h1M44 515.5h1M52 515.5h1M60 515.5h1M68 515.5h1M76 515.5h1M84 515.5h1M92 515.5h1M101 515.5h1M109 515.5h1M117 515.5h1M125 515.5h1M133 515.5h1M141 515.5h1M149 515.5h1M157 515.5h1M165 515.5h1M173 515.5h1M181 515.5h1M189 515.5h1M198 515.5h1M206 515.5h1M214 515.5h1M222 515.5h1M230 515.5h1M238 515.5h1M246 515.5h1M254 515.5h1M262 515.5h1M270 515.5h1M278 515.5h1M286 515.5h1M295 515.5h1M303 515.5h1M311 515.5h1M319 515.5h1M327 515.5h1M335 515.5h1M343 515.5h1M351 515.5h1M359 515.5h1M367 515.5h1M375 515.5h1M383 515.5h1M392 515.5h1M400 515.5h1M408 515.5h1M416 515.5h1M424 515.5h1M432 515.5h1M440 515.5h1M448 515.5h1M456 515.5h1M464 515.5h1M472 515.5h1M480 515.5h1M488 515.5h1M497 515.5h1M505 515.5h1M513 515.5h1M521 515.5h1M529 515.5h1M537 515.5h1M545 515.5h1M553 515.5h1M561 515.5h1M569 515.5h1M577 515.5h1M585 515.5h1M594 515.5h1M602 515.5h1M610 515.5h1M618 515.5h1M626 515.5h1M634 515.5h1M642 515.5h1M650 515.5h1M658 515.5h1M666 515.5h1M674 515.5h1M682 515.5h1M691 515.5h1M699 515.5h1M707 515.5h1M715 515.5h1M723 515.5h1M731 515.5h1M739 515.5h1M747 515.5h1M755 515.5h1M763 515.5h1M771 515.5h1M779 515.5h1M788 515.5h1M796 515.5h1M804 515.5h1M812 515.5h1M820 515.5h1M828 515.5h1M836 515.5h1M844 515.5h1M852 515.5h1M860 515.5h1M868 515.5h1M876 515.5h1M885 515.5h1M893 515.5h1M901 515.5h1M909 515.5h1M917 515.5h1M925 515.5h1M933 515.5h1M941 515.5h1M949 515.5h1M957 515.5h1M965 515.5h1M973 515.5h1M982 515.5h1M990 515.5h1M998 515.5h1M1006 515.5h1M1014 515.5h1M1022 515.5h1M1030 515.5h1M1038 515.5h1M1046 515.5h1" stroke="#f0f0f0" stroke-width="1"/>
<rect x="4" y="625" width="1071" height="3" fill="#008b8b" shape-rendering="crispEdges"/>
<circle cx="49" cy="482.6" r="4.3" fill="#000" fill-opacity="0.35" stroke="#00c0c8" stroke-width="1.2"/>
<text x="49" y="485.5" fill="#00c0c8" font-size="8.5" text-anchor="middle" font-weight="400">2</text>
<circle cx="332" cy="482.6" r="4.3" fill="#000" fill-opacity="0.35" stroke="#00c0c8" stroke-width="1.2"/>
<text x="332" y="485.5" fill="#00c0c8" font-size="8.5" text-anchor="middle" font-weight="400">2</text>
<circle cx="526" cy="482.6" r="4.3" fill="#000" fill-opacity="0.35" stroke="#00c0c8" stroke-width="1.2"/>
<text x="526" y="485.5" fill="#00c0c8" font-size="8.5" text-anchor="middle" font-weight="400">2</text>
<circle cx="340" cy="434.6" r="4.3" fill="#000" fill-opacity="0.35" stroke="#e000e0" stroke-width="1.2"/>
<text x="340" y="437.5" fill="#e000e0" font-size="8.5" text-anchor="middle" font-weight="400">3</text>
<circle cx="526" cy="434.6" r="4.3" fill="#000" fill-opacity="0.35" stroke="#e000e0" stroke-width="1.2"/>
<text x="526" y="437.5" fill="#e000e0" font-size="8.5" text-anchor="middle" font-weight="400">3</text>
<circle cx="49" cy="528.9" r="4.3" fill="#000" fill-opacity="0.35" stroke="#b0b0b0" stroke-width="1.2"/>
<text x="49" y="531.8" fill="#b0b0b0" font-size="8.5" text-anchor="middle" font-weight="400">1</text>
<circle cx="323.6" cy="528.9" r="4.3" fill="#000" fill-opacity="0.35" stroke="#b0b0b0" stroke-width="1.2"/>
<text x="323.6" y="531.8" fill="#b0b0b0" font-size="8.5" text-anchor="middle" font-weight="400">1</text>
<circle cx="461" cy="528.9" r="4.3" fill="#000" fill-opacity="0.35" stroke="#b0b0b0" stroke-width="1.2"/>
<text x="461" y="531.8" fill="#b0b0b0" font-size="8.5" text-anchor="middle" font-weight="400">1</text>
<circle cx="526" cy="528.9" r="4.3" fill="#000" fill-opacity="0.35" stroke="#b0b0b0" stroke-width="1.2"/>
<text x="526" y="531.8" fill="#b0b0b0" font-size="8.5" text-anchor="middle" font-weight="400">1</text>
<circle cx="590.3" cy="528.9" r="4.3" fill="#000" fill-opacity="0.35" stroke="#b0b0b0" stroke-width="1.2"/>
<text x="590.3" y="531.8" fill="#b0b0b0" font-size="8.5" text-anchor="middle" font-weight="400">1</text>
<circle cx="534.2" cy="569.7" r="4.3" fill="#000" fill-opacity="0.35" stroke="#00c0d8" stroke-width="1.2"/>
<text x="534.2" y="572.6" fill="#00c0d8" font-size="8.5" text-anchor="middle" font-weight="400">4</text>
<defs><radialGradient id="gy" cx="0.4" cy="0.35" r="0.7"><stop offset="0" stop-color="#ffe23c"/><stop offset="0.6" stop-color="#f7c81a"/><stop offset="1" stop-color="#c08a08"/></radialGradient><radialGradient id="gb" cx="0.5" cy="0.55" r="0.6"><stop offset="0" stop-color="#f4ecff"/><stop offset="0.35" stop-color="#d8d4fa"/><stop offset="0.75" stop-color="#6f86e8"/><stop offset="1" stop-color="#3446b8"/></radialGradient></defs>
<g transform="translate(10,605)"><circle r="7.05" fill="url(#gy)"/><rect x="-4" y="-3" width="2" height="2" fill="#3a2600" shape-rendering="crispEdges"/><rect x="2" y="-3" width="2" height="2" fill="#3a2600" shape-rendering="crispEdges"/><path d="M-3.3 2.2 Q0 6.8 3.4 2.2" stroke="#3a2600" stroke-width="1.1" fill="none"/></g>
<g transform="translate(53,605)"><circle r="7.05" fill="url(#gy)"/><rect x="-4" y="-3" width="2" height="2" fill="#3a2600" shape-rendering="crispEdges"/><rect x="2" y="-3" width="2" height="2" fill="#3a2600" shape-rendering="crispEdges"/><path d="M-3.3 2.2 Q0 6.8 3.4 2.2" stroke="#3a2600" stroke-width="1.1" fill="none"/></g>
<g transform="translate(498,605)"><circle r="7.05" fill="url(#gy)"/><rect x="-4" y="-3" width="2" height="2" fill="#3a2600" shape-rendering="crispEdges"/><rect x="2" y="-3" width="2" height="2" fill="#3a2600" shape-rendering="crispEdges"/><path d="M-3.3 2.2 Q0 6.8 3.4 2.2" stroke="#3a2600" stroke-width="1.1" fill="none"/></g>
<g transform="translate(538,605)"><circle r="7.05" fill="url(#gy)"/><rect x="-4" y="-3" width="2" height="2" fill="#3a2600" shape-rendering="crispEdges"/><rect x="2" y="-3" width="2" height="2" fill="#3a2600" shape-rendering="crispEdges"/><path d="M-3.3 2.2 Q0 6.8 3.4 2.2" stroke="#3a2600" stroke-width="1.1" fill="none"/></g>
<g transform="translate(1047,605)"><circle r="7.05" fill="url(#gy)"/><rect x="-4" y="-3" width="2" height="2" fill="#3a2600" shape-rendering="crispEdges"/><rect x="2" y="-3" width="2" height="2" fill="#3a2600" shape-rendering="crispEdges"/><path d="M-3.3 2.2 Q0 6.8 3.4 2.2" stroke="#3a2600" stroke-width="1.1" fill="none"/></g>
<g transform="translate(312,457)"><circle r="6.9" fill="url(#gb)"/><rect x="-3" y="-2.6" width="2" height="2" fill="#111"/><rect x="1" y="-2.6" width="2" height="2" fill="#111"/><path d="M-4 -3.8 L-2.6 -5.6 M4 -3.8 L2.6 -5.6" stroke="#27306e" stroke-width="1" fill="none"/><path d="M-3.6 2.6 Q0 0.2 3.6 2.6" stroke="#111" stroke-width="1.1" fill="none"/></g>
<g transform="translate(700,457)"><circle r="6.9" fill="url(#gb)"/><rect x="-3" y="-2.6" width="2" height="2" fill="#111"/><rect x="1" y="-2.6" width="2" height="2" fill="#111"/><path d="M-4 -3.8 L-2.6 -5.6 M4 -3.8 L2.6 -5.6" stroke="#27306e" stroke-width="1" fill="none"/><path d="M-3.6 2.6 Q0 0.2 3.6 2.6" stroke="#111" stroke-width="1.1" fill="none"/></g>
<g transform="translate(918,457)"><circle r="6.9" fill="url(#gb)"/><rect x="-3" y="-2.6" width="2" height="2" fill="#111"/><rect x="1" y="-2.6" width="2" height="2" fill="#111"/><path d="M-4 -3.8 L-2.6 -5.6 M4 -3.8 L2.6 -5.6" stroke="#27306e" stroke-width="1" fill="none"/><path d="M-3.6 2.6 Q0 0.2 3.6 2.6" stroke="#111" stroke-width="1.1" fill="none"/></g>
<g shape-rendering="crispEdges">
<rect x="0" y="19" width="1127" height="1" fill="#c00000"/>
<rect x="0" y="0" width="1" height="20" fill="#c00000"/>
<rect x="23" y="0" width="1" height="20" fill="#c00000"/>
<rect x="810" y="0" width="1" height="20" fill="#c00000"/>
<rect x="844" y="0" width="1" height="20" fill="#c00000"/>
<rect x="879" y="0" width="1" height="20" fill="#c00000"/>
<rect x="914" y="0" width="1" height="20" fill="#c00000"/>
<rect x="949" y="0" width="1" height="20" fill="#c00000"/>
<rect x="984" y="0" width="1" height="20" fill="#c00000"/>
<rect x="1019" y="0" width="1" height="20" fill="#c00000"/>
<rect x="1054" y="0" width="1" height="20" fill="#c00000"/>
<rect x="1089" y="0" width="1" height="20" fill="#c00000"/>
<rect x="1126" y="0" width="1" height="385" fill="#c00000"/>
<rect x="1075" y="20" width="1" height="365" fill="#c00000"/>
<rect x="1076" y="70" width="5" height="1" fill="#c00000"/>
<rect x="1076" y="95" width="2" height="1" fill="#c00000"/>
<rect x="1076" y="119" width="5" height="1" fill="#c00000"/>
<rect x="1076" y="144" width="2" height="1" fill="#c00000"/>
<rect x="1076" y="169" width="5" height="1" fill="#c00000"/>
<rect x="1076" y="193" width="2" height="1" fill="#c00000"/>
<rect x="1076" y="218" width="5" height="1" fill="#c00000"/>
<rect x="1076" y="243" width="2" height="1" fill="#c00000"/>
<rect x="1076" y="268" width="5" height="1" fill="#c00000"/>
<rect x="1076" y="292" width="2" height="1" fill="#c00000"/>
<rect x="1076" y="317" width="5" height="1" fill="#c00000"/>
<rect x="1076" y="342" width="2" height="1" fill="#c00000"/>
<rect x="1076" y="366" width="5" height="1" fill="#c00000"/>
<rect x="0" y="385" width="1075" height="1" fill="#c00000"/>
<rect x="1075" y="385" width="52" height="2" fill="#c00000"/>
<rect x="1075" y="385" width="2" height="215" fill="#c00000"/>
<rect x="1125" y="385" width="2" height="215" fill="#c00000"/>
<rect x="1077" y="581" width="4" height="1" fill="#c00000"/>
<rect x="1077" y="559" width="2" height="1" fill="#c00000"/>
<rect x="1077" y="537" width="4" height="1" fill="#c00000"/>
<rect x="1077" y="515" width="2" height="1" fill="#c00000"/>
<rect x="1077" y="493" width="4" height="1" fill="#c00000"/>
<rect x="1077" y="471" width="2" height="1" fill="#c00000"/>
<rect x="1077" y="449" width="4" height="1" fill="#c00000"/>
<rect x="1077" y="427" width="2" height="1" fill="#c00000"/>
<rect x="1077" y="405" width="4" height="1" fill="#c00000"/>
<rect x="1127" y="25" width="3" height="1" fill="#c00000"/>
<rect x="1127" y="45" width="3" height="1" fill="#c00000"/>
<rect x="1127" y="397" width="3" height="1" fill="#c00000"/>
<rect x="1127" y="429" width="3" height="2" fill="#c00000"/>
<rect x="1128" y="59" width="2" height="1" fill="#909090"/>
<rect x="1128" y="78" width="2" height="1" fill="#909090"/>
<rect x="1128" y="97" width="2" height="1" fill="#909090"/>
<rect x="1128" y="115" width="2" height="1" fill="#909090"/>
<rect x="1128" y="134" width="2" height="1" fill="#909090"/>
<rect x="1128" y="152" width="2" height="1" fill="#909090"/>
<rect x="1128" y="171" width="2" height="1" fill="#909090"/>
<rect x="1128" y="189" width="2" height="1" fill="#909090"/>
<rect x="1128" y="208" width="2" height="1" fill="#909090"/>
<rect x="1128" y="226" width="2" height="1" fill="#909090"/>
<rect x="1128" y="245" width="2" height="1" fill="#909090"/>
<rect x="1128" y="263" width="2" height="1" fill="#909090"/>
<rect x="1128" y="282" width="2" height="1" fill="#909090"/>
<rect x="1128" y="300" width="2" height="1" fill="#909090"/>
<rect x="1128" y="319" width="2" height="1" fill="#909090"/>
<rect x="1128" y="337" width="2" height="1" fill="#909090"/>
<rect x="1128" y="356" width="2" height="1" fill="#909090"/>
<rect x="1128" y="374" width="2" height="1" fill="#909090"/>
<rect x="1128" y="411" width="2" height="1" fill="#909090"/>
<rect x="1128" y="448" width="2" height="1" fill="#909090"/>
<rect x="1128" y="466" width="2" height="1" fill="#909090"/>
<rect x="1128" y="485" width="2" height="1" fill="#909090"/>
<rect x="1128" y="503" width="2" height="1" fill="#909090"/>
<rect x="1128" y="522" width="2" height="1" fill="#909090"/>
<rect x="1128" y="540" width="2" height="1" fill="#909090"/>
<rect x="1128" y="559" width="2" height="1" fill="#909090"/>
<rect x="1128" y="577" width="2" height="1" fill="#909090"/>
<rect x="1128" y="31" width="2" height="1" fill="#d0d0d0"/>
<rect x="1128" y="34" width="2" height="1" fill="#d0d0d0"/>
<rect x="1128" y="36" width="2" height="1" fill="#d0d0d0"/>
<rect x="0" y="630" width="978" height="1" fill="#c00000"/>
<rect x="0" y="646" width="978" height="1" fill="#c00000"/>
<rect x="0" y="630" width="1" height="20" fill="#c00000"/>
<rect x="180" y="630" width="1" height="16" fill="#c00000"/>
<rect x="326" y="630" width="1" height="16" fill="#c00000"/>
<rect x="496" y="630" width="1" height="16" fill="#c00000"/>
<rect x="665" y="630" width="1" height="16" fill="#c00000"/>
<rect x="71" y="630" width="1" height="4" fill="#c00000"/>
<rect x="108" y="630" width="1" height="4" fill="#c00000"/>
<rect x="144" y="630" width="1" height="4" fill="#c00000"/>
<rect x="217" y="630" width="1" height="4" fill="#c00000"/>
<rect x="253" y="630" width="1" height="4" fill="#c00000"/>
<rect x="290" y="630" width="1" height="4" fill="#c00000"/>
<rect x="369" y="630" width="1" height="4" fill="#c00000"/>
<rect x="411" y="630" width="1" height="4" fill="#c00000"/>
<rect x="454" y="630" width="1" height="4" fill="#c00000"/>
<rect x="538" y="630" width="1" height="4" fill="#c00000"/>
<rect x="580" y="630" width="1" height="4" fill="#c00000"/>
<rect x="624" y="630" width="1" height="4" fill="#c00000"/>
<rect x="704" y="630" width="1" height="4" fill="#c00000"/>
<rect x="742" y="630" width="1" height="4" fill="#c00000"/>
<rect x="781" y="630" width="1" height="4" fill="#c00000"/>
<rect x="901" y="630" width="1" height="4" fill="#c00000"/>
<rect x="941" y="630" width="1" height="4" fill="#c00000"/>
<rect x="42" y="646" width="1" height="4" fill="#c00000"/>
<rect x="73" y="646" width="1" height="4" fill="#c00000"/>
<rect x="116" y="646" width="1" height="4" fill="#c00000"/>
<rect x="144" y="646" width="1" height="4" fill="#c00000"/>
<rect x="177" y="646" width="1" height="4" fill="#c00000"/>
<rect x="208" y="646" width="1" height="4" fill="#c00000"/>
<rect x="241" y="646" width="1" height="4" fill="#c00000"/>
<rect x="282" y="646" width="1" height="4" fill="#c00000"/>
<rect x="308" y="646" width="1" height="4" fill="#c00000"/>
<rect x="322" y="646" width="1" height="4" fill="#c00000"/>
<rect x="358" y="646" width="1" height="4" fill="#c00000"/>
<rect x="390" y="646" width="1" height="4" fill="#c00000"/>
<rect x="423" y="646" width="1" height="4" fill="#c00000"/>
<rect x="449" y="646" width="1" height="4" fill="#c00000"/>
<rect x="480" y="646" width="1" height="4" fill="#c00000"/>
<rect x="508" y="646" width="1" height="4" fill="#c00000"/>
<rect x="540" y="646" width="1" height="4" fill="#c00000"/>
<rect x="568" y="646" width="1" height="4" fill="#c00000"/>
<rect x="628" y="646" width="1" height="4" fill="#c00000"/>
<rect x="669" y="646" width="1" height="4" fill="#c00000"/>
<rect x="718" y="646" width="1" height="4" fill="#c00000"/>
<rect x="766" y="646" width="1" height="4" fill="#c00000"/>
<rect x="840" y="646" width="1" height="4" fill="#c00000"/>
<rect x="8" y="648" width="1" height="2" fill="#c0c0c0"/>
<rect x="11" y="648" width="1" height="2" fill="#c0c0c0"/>
<rect x="14" y="648" width="1" height="2" fill="#c0c0c0"/>
<rect x="17" y="648" width="1" height="2" fill="#c0c0c0"/>
<rect x="52" y="648" width="1" height="2" fill="#c0c0c0"/>
<rect x="829" y="647" width="1" height="3" fill="#c0c0c0"/>
<rect x="845" y="648" width="7" height="1" fill="#40e0e0"/>
<rect x="855" y="648" width="9" height="1" fill="#40e0e0"/>
<rect x="848" y="648" width="1" height="2" fill="#40e0e0"/>
<rect x="857" y="648" width="1" height="2" fill="#40e0e0"/>
<rect x="861" y="648" width="1" height="2" fill="#40e0e0"/>
<rect x="809" y="631" width="78" height="15" fill="#000090"/>
<rect x="809.5" y="631.5" width="77" height="14" fill="none" stroke="#3030c0"/>
<rect x="1077" y="427" width="48" height="15" fill="#000080"/>
</g>
<text x="28" y="13.68" fill="#c8c8c8" xml:space="preserve"><tspan font-size="12.3" letter-spacing="-0.3">分时</tspan></text>
<text x="61.7" y="13.68" fill="#c8c8c8" xml:space="preserve"><tspan font-size="12" letter-spacing="-0.5" dy="-0.8">1</tspan><tspan font-size="12.3" letter-spacing="-0.3" dy="0.8">分钟</tspan></text>
<text x="101.7" y="13.68" fill="#c8c8c8" xml:space="preserve"><tspan font-size="12" letter-spacing="-0.5" dy="-0.8">5</tspan><tspan font-size="12.3" letter-spacing="-0.3" dy="0.8">分钟</tspan></text>
<text x="140.4" y="13.68" fill="#c8c8c8" xml:space="preserve"><tspan font-size="12" letter-spacing="-0.5" dy="-0.8">15</tspan><tspan font-size="12.3" letter-spacing="-0.3" dy="0.8">分钟</tspan></text>
<text x="186.8" y="13.68" fill="#c8c8c8" xml:space="preserve"><tspan font-size="12" letter-spacing="-0.5" dy="-0.8">30</tspan><tspan font-size="12.3" letter-spacing="-0.3" dy="0.8">分钟</tspan></text>
<text x="231" y="13.68" fill="#c8c8c8" xml:space="preserve"><tspan font-size="12" letter-spacing="-0.5" dy="-0.8">60</tspan><tspan font-size="12.3" letter-spacing="-0.3" dy="0.8">分钟</tspan></text>
<text x="278.5" y="13.68" fill="#40e0ff" xml:space="preserve"><tspan font-size="12.3" letter-spacing="-0.3">日线</tspan></text>
<text x="312.5" y="13.68" fill="#c8c8c8" xml:space="preserve"><tspan font-size="12.3" letter-spacing="-0.3">周线</tspan></text>
<text x="346" y="13.68" fill="#c8c8c8" xml:space="preserve"><tspan font-size="12.3" letter-spacing="-0.3">月线</tspan></text>
<text x="378.5" y="13.68" fill="#c8c8c8" xml:space="preserve"><tspan font-size="12.3" letter-spacing="-0.3">多周期</tspan></text>
<text x="422.5" y="13.68" fill="#c8c8c8" xml:space="preserve"><tspan font-size="12.3" letter-spacing="-0.3">更多</tspan></text>
<text x="816" y="13.68" fill="#c8c8c8" xml:space="preserve"><tspan font-size="12.3" letter-spacing="-0.3">复权</tspan></text>
<text x="850.2" y="13.68" fill="#c8c8c8" xml:space="preserve"><tspan font-size="12.3" letter-spacing="-0.3">叠加</tspan></text>
<text x="884.7" y="13.68" fill="#c8c8c8" xml:space="preserve"><tspan font-size="12.3" letter-spacing="-0.3">多股</tspan></text>
<text x="919.7" y="13.68" fill="#c8c8c8" xml:space="preserve"><tspan font-size="12.3" letter-spacing="-0.3">统计</tspan></text>
<text x="954.2" y="13.68" fill="#c8c8c8" xml:space="preserve"><tspan font-size="12.3" letter-spacing="-0.3">画线</tspan></text>
<text x="992.3" y="13.68" fill="#c8c8c8" xml:space="preserve"><tspan font-size="12" letter-spacing="0.6" dy="-0.8">F10</tspan></text>
<text x="1024.9" y="13.68" fill="#c8c8c8" xml:space="preserve"><tspan font-size="12.3" letter-spacing="-0.3">标记</tspan></text>
<text x="1057.6" y="13.68" fill="#c8c8c8" xml:space="preserve"><tspan font-size="12" letter-spacing="-0.5" dy="-0.8">+</tspan><tspan font-size="12.3" letter-spacing="-0.3" dy="0.8">自选</tspan></text>
<text x="1095.6" y="13.68" fill="#c8c8c8" xml:space="preserve"><tspan font-size="12.3" letter-spacing="-0.3">返回</tspan></text>
<path d="M450.5 4.5 L456 9.5 L450.5 14.5" stroke="#c8c8c8" fill="none" stroke-width="1"/>
<rect x="5.6" y="3.6" width="10.8" height="9.8" rx="2.4" fill="none" stroke="#8c8c8c" stroke-width="1.3"/>
<rect x="11.8" y="5" width="3.1" height="6.8" fill="#989898"/>
<rect x="1060.6" y="24.6" width="10.8" height="9.8" rx="2.4" fill="none" stroke="#8c8c8c" stroke-width="1.3"/>
<rect x="1066.8" y="26" width="3.1" height="6.8" fill="#989898"/>
<path d="M1047.5 24.2 L1052.8 29.5 L1047.5 34.8 L1042.2 29.5 Z" fill="none" stroke="#7a7a7a" stroke-width="0.9"/>
<text x="3" y="33.68" fill="#c8c8c8" xml:space="preserve"><tspan font-size="12.3" letter-spacing="-0.3">标准股份</tspan><tspan font-size="12" letter-spacing="0" dy="-0.8">(</tspan><tspan font-size="12.3" letter-spacing="-0.3" dy="0.8">日线</tspan><tspan font-size="12" letter-spacing="0" dy="-0.8">.</tspan><tspan font-size="12.3" letter-spacing="-0.3" dy="0.8">前复权</tspan><tspan font-size="12" letter-spacing="0" dy="-0.8">)</tspan></text>
<circle cx="134" cy="29" r="6.5" fill="#707070"/><path d="M130.5 27.5 L134 31 L137.5 27.5" stroke="#101010" stroke-width="1.4" fill="none"/>
<text x="1120.8" y="76.2" fill="#ff3232" text-anchor="end" xml:space="preserve"><tspan font-size="12.8" letter-spacing="-0.4" dy="-0.8">7.00</tspan></text>
<text x="1120.8" y="101.8" fill="#ff3232" text-anchor="end" xml:space="preserve"><tspan font-size="12.8" letter-spacing="-0.4" dy="-0.8">6.75</tspan></text>
<text x="1120.8" y="125.6" fill="#ff3232" text-anchor="end" xml:space="preserve"><tspan font-size="12.8" letter-spacing="-0.4" dy="-0.8">6.50</tspan></text>
<text x="1120.8" y="151.2" fill="#ff3232" text-anchor="end" xml:space="preserve"><tspan font-size="12.8" letter-spacing="-0.4" dy="-0.8">6.25</tspan></text>
<text x="1120.8" y="175" fill="#ff3232" text-anchor="end" xml:space="preserve"><tspan font-size="12.8" letter-spacing="-0.4" dy="-0.8">6.00</tspan></text>
<text x="1120.8" y="200.6" fill="#ff3232" text-anchor="end" xml:space="preserve"><tspan font-size="12.8" letter-spacing="-0.4" dy="-0.8">5.75</tspan></text>
<text x="1120.8" y="224.4" fill="#ff3232" text-anchor="end" xml:space="preserve"><tspan font-size="12.8" letter-spacing="-0.4" dy="-0.8">5.50</tspan></text>
<text x="1120.8" y="250" fill="#ff3232" text-anchor="end" xml:space="preserve"><tspan font-size="12.8" letter-spacing="-0.4" dy="-0.8">5.25</tspan></text>
<text x="1120.8" y="273.8" fill="#ff3232" text-anchor="end" xml:space="preserve"><tspan font-size="12.8" letter-spacing="-0.4" dy="-0.8">5.00</tspan></text>
<text x="1120.8" y="299.4" fill="#ff3232" text-anchor="end" xml:space="preserve"><tspan font-size="12.8" letter-spacing="-0.4" dy="-0.8">4.75</tspan></text>
<text x="1120.8" y="323.2" fill="#ff3232" text-anchor="end" xml:space="preserve"><tspan font-size="12.8" letter-spacing="-0.4" dy="-0.8">4.50</tspan></text>
<text x="1120.8" y="348.8" fill="#ff3232" text-anchor="end" xml:space="preserve"><tspan font-size="12.8" letter-spacing="-0.4" dy="-0.8">4.25</tspan></text>
<text x="1120.8" y="372.6" fill="#ff3232" text-anchor="end" xml:space="preserve"><tspan font-size="12.8" letter-spacing="-0.4" dy="-0.8">4.00</tspan></text>
<text x="1120.6" y="410.8" fill="#ff3232" text-anchor="end" xml:space="preserve"><tspan font-size="12.8" letter-spacing="-0.4" dy="-0.8">100.0</tspan></text>
<text x="1120.6" y="454.9" fill="#ff3232" text-anchor="end" xml:space="preserve"><tspan font-size="12.8" letter-spacing="-0.4" dy="-0.8">80.00</tspan></text>
<text x="1120.6" y="499" fill="#ff3232" text-anchor="end" xml:space="preserve"><tspan font-size="12.8" letter-spacing="-0.4" dy="-0.8">60.00</tspan></text>
<text x="1120.6" y="543.1" fill="#ff3232" text-anchor="end" xml:space="preserve"><tspan font-size="12.8" letter-spacing="-0.4" dy="-0.8">40.00</tspan></text>
<text x="1120.6" y="587.2" fill="#ff3232" text-anchor="end" xml:space="preserve"><tspan font-size="12.8" letter-spacing="-0.4" dy="-0.8">20.00</tspan></text>
<text x="1077.5" y="438.5" fill="#c8c8c8" xml:space="preserve"><tspan font-size="12" letter-spacing="0" dy="-0.8">83.23</tspan></text>
<circle cx="8" cy="394" r="6" fill="#707070"/><path d="M4.8 392.5 L8 395.8 L11.2 392.5" stroke="#101010" stroke-width="1.4" fill="none"/>
<text x="17.5" y="398.28" fill="#c8c8c8" xml:space="preserve"><tspan font-size="12.3" letter-spacing="-0.3">股朋指标网</tspan></text>
<text x="82.5" y="398.28" fill="#00ff00" xml:space="preserve"><tspan font-size="12.3" letter-spacing="-0.3">短期</tspan><tspan font-size="12" letter-spacing="0" dy="-0.8">: 2.75</tspan></text>
<text x="142.5" y="398.28" fill="#ffff00" xml:space="preserve"><tspan font-size="12.3" letter-spacing="-0.3">中期</tspan><tspan font-size="12" letter-spacing="0" dy="-0.8">: 77.36</tspan></text>
<text x="207.5" y="398.28" fill="#ff00ff" xml:space="preserve"><tspan font-size="12.3" letter-spacing="-0.3">长期</tspan><tspan font-size="12" letter-spacing="0" dy="-0.8">: 81.70</tspan></text>
<text x="275" y="398.28" fill="#0018e0" xml:space="preserve"><tspan font-size="12" letter-spacing="0" dy="-0.8">: 100.00</tspan></text>
<text x="323" y="398.28" fill="#ff0000" xml:space="preserve"><tspan font-size="12" letter-spacing="0" dy="-0.8">: 0.00</tspan></text>
<text x="357.5" y="398.28" fill="#0040ff" xml:space="preserve"><tspan font-size="12.3" letter-spacing="-0.3">绝对底</tspan><tspan font-size="11.5" letter-spacing="-1.3">④</tspan><tspan font-size="12" letter-spacing="0" dy="-0.8">: 0.00</tspan></text>
<text x="438.8" y="398.28" fill="#ff0000" xml:space="preserve"><tspan font-size="12.3" letter-spacing="-0.3">大底</tspan><tspan font-size="11.5" letter-spacing="-1.3">③</tspan><tspan font-size="12" letter-spacing="0" dy="-0.8">: 0.00</tspan></text>
<text x="508.8" y="398.28" fill="#ff00ff" xml:space="preserve"><tspan font-size="12.3" letter-spacing="-0.3">中底</tspan><tspan font-size="11.5" letter-spacing="-1.3">②</tspan><tspan font-size="12" letter-spacing="0" dy="-0.8">: 0.00</tspan></text>
<text x="577" y="398.28" fill="#808000" xml:space="preserve"><tspan font-size="12.3" letter-spacing="-0.3">短底</tspan><tspan font-size="11.5" letter-spacing="-1.3">①</tspan><tspan font-size="12" letter-spacing="0" dy="-0.8">: 0.00</tspan></text>
<text x="647" y="398.28" fill="#c8c8c8" xml:space="preserve"><tspan font-size="11.5" letter-spacing="-1.3">￥①</tspan><tspan font-size="12" letter-spacing="0" dy="-0.8">: 0.00</tspan></text>
<text x="703" y="398.28" fill="#40c040" xml:space="preserve"><tspan font-size="11.5" letter-spacing="-1.3">￥②</tspan><tspan font-size="12" letter-spacing="0" dy="-0.8">: 21.00</tspan></text>
<text x="767.5" y="398.28" fill="#008080" xml:space="preserve"><tspan font-size="11.5" letter-spacing="-1.3">￥③</tspan><tspan font-size="12" letter-spacing="0" dy="-0.8">: 0.00</tspan></text>
<text x="823" y="398.28" fill="#ffffff" xml:space="preserve"><tspan font-size="12.3" letter-spacing="-0.3">强弱分界</tspan><tspan font-size="12" letter-spacing="0" dy="-0.8">: 50.00</tspan></text>
<text x="914" y="398.28" fill="#ffffff" xml:space="preserve"><tspan font-size="12.3" letter-spacing="-0.3">警戒区</tspan><tspan font-size="12" letter-spacing="0" dy="-0.8">: 90.00</tspan></text>
<text x="991.8" y="398.28" fill="#00e8e8" xml:space="preserve"><tspan font-size="12.3" letter-spacing="-0.3">安全区</tspan><tspan font-size="12" letter-spacing="0" dy="-0.8">: 20.00</tspan></text>
<text x="4.6" y="642.8" fill="#ff3232" xml:space="preserve"><tspan font-size="12" letter-spacing="-0.3" dy="-0.8">2024</tspan><tspan font-size="12.3" letter-spacing="-0.3" dy="0.8">年</tspan></text>
<text x="182.3" y="642.8" fill="#ff3232" xml:space="preserve"><tspan font-size="12" letter-spacing="0" dy="-0.8">2</tspan></text>
<text x="328" y="642.8" fill="#ff3232" xml:space="preserve"><tspan font-size="12" letter-spacing="0" dy="-0.8">3</tspan></text>
<text x="498" y="642.8" fill="#ff3232" xml:space="preserve"><tspan font-size="12" letter-spacing="0" dy="-0.8">4</tspan></text>
<text x="667" y="642.8" fill="#ff3232" xml:space="preserve"><tspan font-size="12" letter-spacing="0" dy="-0.8">5</tspan></text>
<text x="811.3" y="642.8" fill="#ffffff" xml:space="preserve"><tspan font-size="12" letter-spacing="0" dy="-0.8">2025/05/30/</tspan><tspan font-size="12.3" letter-spacing="-0.3" dy="0.8">五</tspan></text>
<rect x="978" y="600" width="152" height="50" fill="#000"/>
<g font-family='"Liberation Serif","Noto Serif CJK SC",serif' font-weight="700">
<text x="999" y="625.5" font-size="19.8" fill="#ffffff" textLength="102" lengthAdjust="spacing" style="filter:drop-shadow(1px 0.8px 0 #6b5a1e)">乐淘公式网</text>
<text x="1001.4" y="644" font-size="13.6" fill="#ffffff" textLength="89.3" lengthAdjust="spacingAndGlyphs" style="filter:drop-shadow(0.8px 0.6px 0 #6b5a1e)">www.60lt.com</text>
</g>
</svg>
</body></html>
